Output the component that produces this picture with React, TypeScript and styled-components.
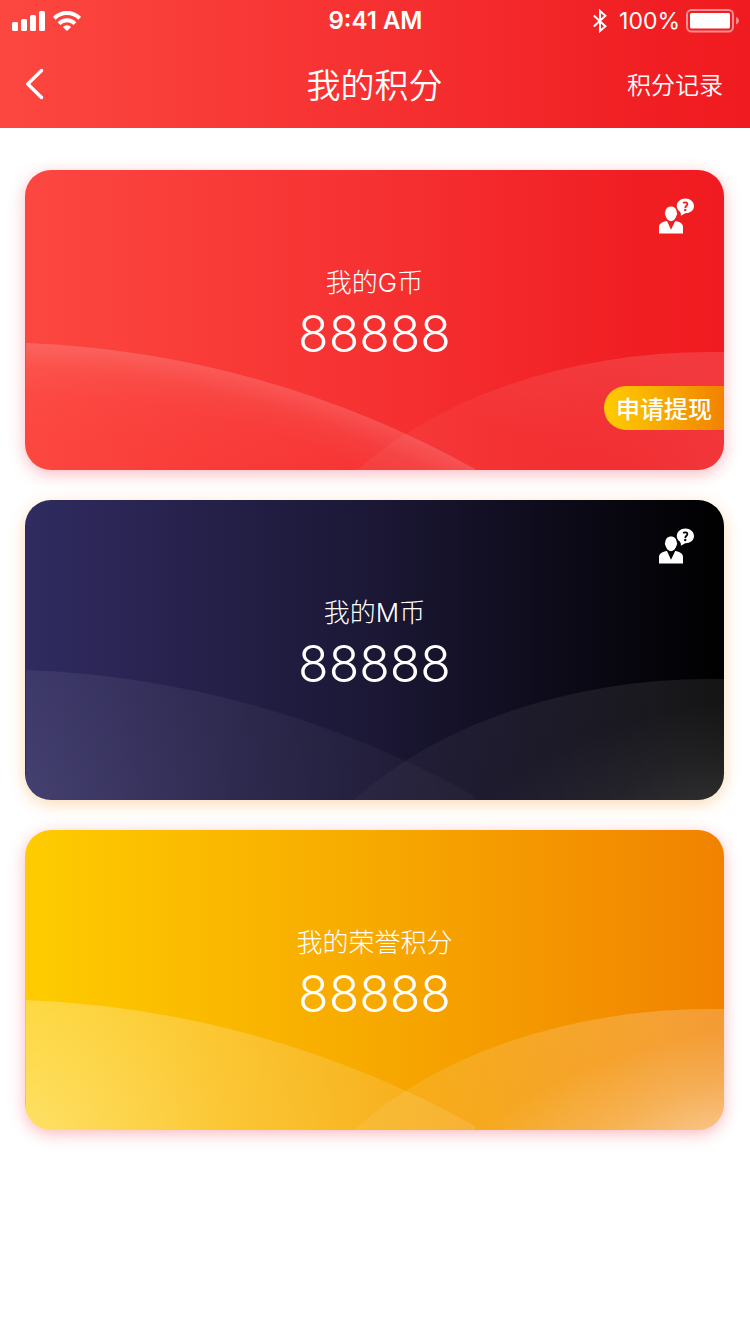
import React, { useId } from 'react';
import styled, { createGlobalStyle } from 'styled-components';

const GlobalStyle = createGlobalStyle`
  *, *::before, *::after { box-sizing: border-box; }
  body {
    margin: 0;
    background: #fff;
    color: #fff;
    font-family: Inter, "Noto Sans CJK SC", sans-serif;
  }
  h1, h2, p { margin: 0; }
  button { border: 0; padding: 0; background: none; color: inherit; font: inherit; cursor: pointer; }
  svg { display: block; }
`;

const hanFont = '"Noto Sans CJK SC", sans-serif';

const gradients = {
  red: 'linear-gradient(90deg, #fc4740 0%, #f63131 50%, #f01e22 88%, #f01b20 100%)',
  dark: 'linear-gradient(90deg, #302b60 0%, #1b1735 50%, #000 100%)',
  gold: 'linear-gradient(90deg, #fecc00 0%, #f7a900 50%, #f18200 100%)',
};

const Header = styled.header`
  background: ${gradients.red};
`;

const StatusBar = styled.div`
  display: grid;
  grid-template-columns: 1fr auto 1fr;
  align-items: center;
  height: 40px;
  padding: 1px 11px 0 12px;
  font-size: 23px;
  line-height: 40px;
`;

const StatusGroup = styled.div<{ $end?: boolean; $gap: number }>`
  display: flex;
  align-items: center;
  justify-content: ${(p) => (p.$end ? 'flex-end' : 'flex-start')};
  gap: ${(p) => p.$gap}px;
`;

const Clock = styled.span`
  font-size: 24px;
  font-weight: 600;
`;

const NavBar = styled.nav`
  display: grid;
  grid-template-columns: 1fr auto 1fr;
  align-items: center;
  height: 88px;
  padding: 0 27px 0 26px;
  font-family: ${hanFont};
`;

const BackButton = styled.button`
  justify-self: start;
`;

const Title = styled.h1`
  font-size: 34px;
  font-weight: 350;
  line-height: 48px;
`;

const RecordLink = styled.a`
  justify-self: end;
  color: inherit;
  font-size: 24px;
  font-weight: 350;
  line-height: 36px;
  text-decoration: none;
`;

const CardList = styled.main`
  display: flex;
  flex-direction: column;
  gap: 30px;
  padding: 42px 26px 60px 25px;
`;

type Tone = 'red' | 'dark' | 'gold';

const Card = styled.section<{ $tone: Tone }>`
  position: relative;
  min-height: 300px;
  padding: 95px 24px 60px;
  border-radius: 26px;
  background: ${(p) => gradients[p.$tone]};
  box-shadow: 0 4px 16px ${(p) => (p.$tone === 'dark' ? 'rgba(241, 140, 20, 0.32)' : 'rgba(240, 27, 45, 0.3)')};
  text-align: center;
`;

const Waves = styled.svg`
  position: absolute;
  inset: 0;
  width: 100%;
  height: 100%;
  border-radius: 26px;
`;

const Label = styled.h2`
  position: relative;
  font-size: 26px;
  font-weight: 300;
  line-height: 36px;
`;

const Amount = styled.p`
  position: relative;
  margin-top: 3px;
  font-size: 50px;
  font-weight: 300;
  line-height: 60px;
`;

const HelpButton = styled.button`
  position: absolute;
  top: 28px;
  right: 29px;
`;

const WithdrawButton = styled.button`
  position: absolute;
  right: 0;
  bottom: 40px;
  height: 44px;
  padding: 0 12px;
  border-radius: 22px 0 0 22px;
  background: ${gradients.gold};
  font-family: ${hanFont};
  font-size: 24px;
  font-weight: 500;
  line-height: 44px;
`;

function SignalIcon() {
  return (
    <svg width="33" height="20" viewBox="0 0 33 20" fill="#fff" aria-hidden="true">
      <rect x="0" y="11" width="6" height="9" rx="1.5" />
      <rect x="9" y="8" width="6" height="12" rx="1.5" />
      <rect x="18" y="4" width="6" height="16" rx="1.5" />
      <rect x="27" y="0" width="6" height="20" rx="1.5" />
    </svg>
  );
}

function WifiIcon() {
  return (
    <svg width="28" height="20" viewBox="0 0 28 20" aria-hidden="true">
      <g fill="none" stroke="#fff" strokeWidth="4">
        <path d="M1.3 7.3A18 18 0 0 1 26.7 7.3" />
        <path d="M6 12.6A11.5 11.5 0 0 1 22 12.6" />
      </g>
      <path d="M9.8 15.9A6 6 0 0 1 18.2 15.9L14 20Z" fill="#fff" />
    </svg>
  );
}

function BluetoothIcon() {
  return (
    <svg width="14" height="24" viewBox="0 0 14 24" fill="none" stroke="#fff" strokeWidth="2" aria-hidden="true">
      <path d="M0.8 6.5L12.4 17.2L7 22V2L12.4 6.8L0.8 17.5" />
    </svg>
  );
}

function BatteryIcon() {
  return (
    <svg width="53" height="24" viewBox="0 0 53 24" aria-hidden="true">
      <rect x="1" y="1" width="46" height="21.5" rx="4.5" fill="none" stroke="#fff" strokeOpacity="0.5" strokeWidth="2" />
      <rect x="4" y="4" width="40" height="15.5" rx="1.5" fill="#fff" />
      <path d="M50 8C54 9.5 54 14 50 15.5Z" fill="#fff" fillOpacity="0.5" />
    </svg>
  );
}

function BackIcon() {
  return (
    <svg width="18" height="32" viewBox="2 0 18 32" fill="none" stroke="#fff" strokeWidth="3.4" strokeLinecap="round" strokeLinejoin="round" aria-hidden="true">
      <path d="M17.5 2.5L3.8 16L17.5 29.5" />
    </svg>
  );
}

function HelpIcon({ markColor }: { markColor: string }) {
  return (
    <svg width="37" height="36" viewBox="0 0 37 36" fill="#fff" aria-hidden="true">
      <path d="M13 8.6C16.3 8.6 18.4 10.8 18.7 14L19.2 15.8L18.4 18C17.5 21 15.3 23.2 13 23.2S8.5 21 7.6 18L6.8 15.8L7.3 14C7.6 10.8 9.7 8.6 13 8.6Z" />
      <path d="M1 35.5V29C1 25.6 4.5 23.5 9 23L13 31.7L17.2 23C21.7 23.5 25 25.6 25 29V35.5Z" />
      <path d="M27.4 0.5C32.2 0.5 36 3.7 36 8S32.2 15.2 27.4 15.2C26.6 15.2 25.7 16.4 22.8 17.8C23.2 16.2 22.6 14.7 21.8 13.5C19.9 12.2 18.8 10.3 18.8 8C18.8 3.7 22.6 0.5 27.4 0.5Z" />
      <path d="M25.2 5.2C26.6 3.9 29.4 4.1 29.4 6.1C29.4 7.8 27.3 7.8 27.3 9.9" fill="none" stroke={markColor} strokeWidth="1.8" />
      <circle cx="27.2" cy="12" r="1.2" fill={markColor} />
    </svg>
  );
}

function CardWaves({ tone }: { tone: Tone }) {
  const id = useId();
  const left = `${id}l`;
  const right = `${id}r`;
  const corner = `${id}c`;
  const glow = { red: 0, dark: 0.08, gold: 0.32 }[tone];
  const rightTop = { red: 0.13, dark: 0.08, gold: 0.2 }[tone];
  const cornerGlow = { red: 0.04, dark: 0.12, gold: 0.46 }[tone];
  const y = tone === 'red' ? 3 : 0;
  const rightShape = 'M329 300A444 300 0 0 1 685 179H699V300Z';
  return (
    <Waves viewBox="0 0 699 300" preserveAspectRatio="none" aria-hidden="true">
      <defs>
        {tone === 'red' ? (
          <radialGradient id={left} gradientUnits="userSpaceOnUse" cx="-32" cy="1170" r="1000">
            <stop offset="0.9" stopColor="#fff" stopOpacity="0" />
            <stop offset="0.95" stopColor="#fff" stopOpacity="0.02" />
            <stop offset="0.975" stopColor="#fff" stopOpacity="0.06" />
            <stop offset="1" stopColor="#fff" stopOpacity="0.16" />
          </radialGradient>
        ) : (
          <radialGradient id={left} gradientUnits="userSpaceOnUse" cx="-10" cy="330" r="480">
            <stop offset="0" stopColor="#fff" stopOpacity={glow * 1.35} />
            <stop offset="0.2" stopColor="#fff" stopOpacity={glow} />
            <stop offset="0.45" stopColor="#fff" stopOpacity={glow * 0.65} />
            <stop offset="0.75" stopColor="#fff" stopOpacity={glow * 0.42} />
            <stop offset="1" stopColor="#fff" stopOpacity={glow * 0.32} />
          </radialGradient>
        )}
        <linearGradient id={right} gradientUnits="userSpaceOnUse" x1="620" y1="180" x2={tone === 'red' ? 560 : 340} y2="300">
          <stop offset="0" stopColor="#fff" stopOpacity={rightTop} />
          <stop offset="1" stopColor="#fff" stopOpacity={rightTop * 0.35} />
        </linearGradient>
        <radialGradient id={corner} gradientUnits="userSpaceOnUse" cx="0" cy="0" r="1" gradientTransform="translate(699 310) rotate(-12) scale(290 110)">
          <stop offset="0" stopColor="#fff" stopOpacity={cornerGlow} />
          <stop offset="0.5" stopColor="#fff" stopOpacity={cornerGlow * 0.38} />
          <stop offset="1" stopColor="#fff" stopOpacity="0" />
        </radialGradient>
      </defs>
      <g transform={`translate(0 ${y})`}>
        <path d="M1 170A1000 1000 0 0 1 450 296V300H1Z" fill={`url(#${left})`} />
        <path d={rightShape} fill={`url(#${right})`} />
        <path d={rightShape} fill={`url(#${corner})`} />
      </g>
    </Waves>
  );
}

type PointsCardProps = {
  tone: Tone;
  label: string;
  amount: string;
  helpMark?: string;
  action?: string;
};

function PointsCard({ tone, label, amount, helpMark, action }: PointsCardProps) {
  return (
    <Card $tone={tone}>
      <CardWaves tone={tone} />
      <Label>{label}</Label>
      <Amount>{amount}</Amount>
      {helpMark && (
        <HelpButton type="button" aria-label={`${label}说明`}>
          <HelpIcon markColor={helpMark} />
        </HelpButton>
      )}
      {action && <WithdrawButton type="button">{action}</WithdrawButton>}
    </Card>
  );
}

export default function App() {
  return (
    <>
      <GlobalStyle />
      <Header>
        <StatusBar>
          <StatusGroup $gap={8}>
            <SignalIcon />
            <WifiIcon />
          </StatusGroup>
          <Clock>9:41 AM</Clock>
          <StatusGroup $end $gap={6}>
            <StatusGroup $gap={12}>
              <BluetoothIcon />
              <span>100%</span>
            </StatusGroup>
            <BatteryIcon />
          </StatusGroup>
        </StatusBar>
        <NavBar>
          <BackButton type="button" aria-label="返回">
            <BackIcon />
          </BackButton>
          <Title>我的积分</Title>
          <RecordLink href="#records">积分记录</RecordLink>
        </NavBar>
      </Header>
      <CardList>
        <PointsCard tone="red" label="我的G币" amount="88888" helpMark="#f01f23" action="申请提现" />
        <PointsCard tone="dark" label="我的M币" amount="88888" helpMark="#050508" />
        <PointsCard tone="gold" label="我的荣誉积分" amount="88888" />
      </CardList>
    </>
  );
}
